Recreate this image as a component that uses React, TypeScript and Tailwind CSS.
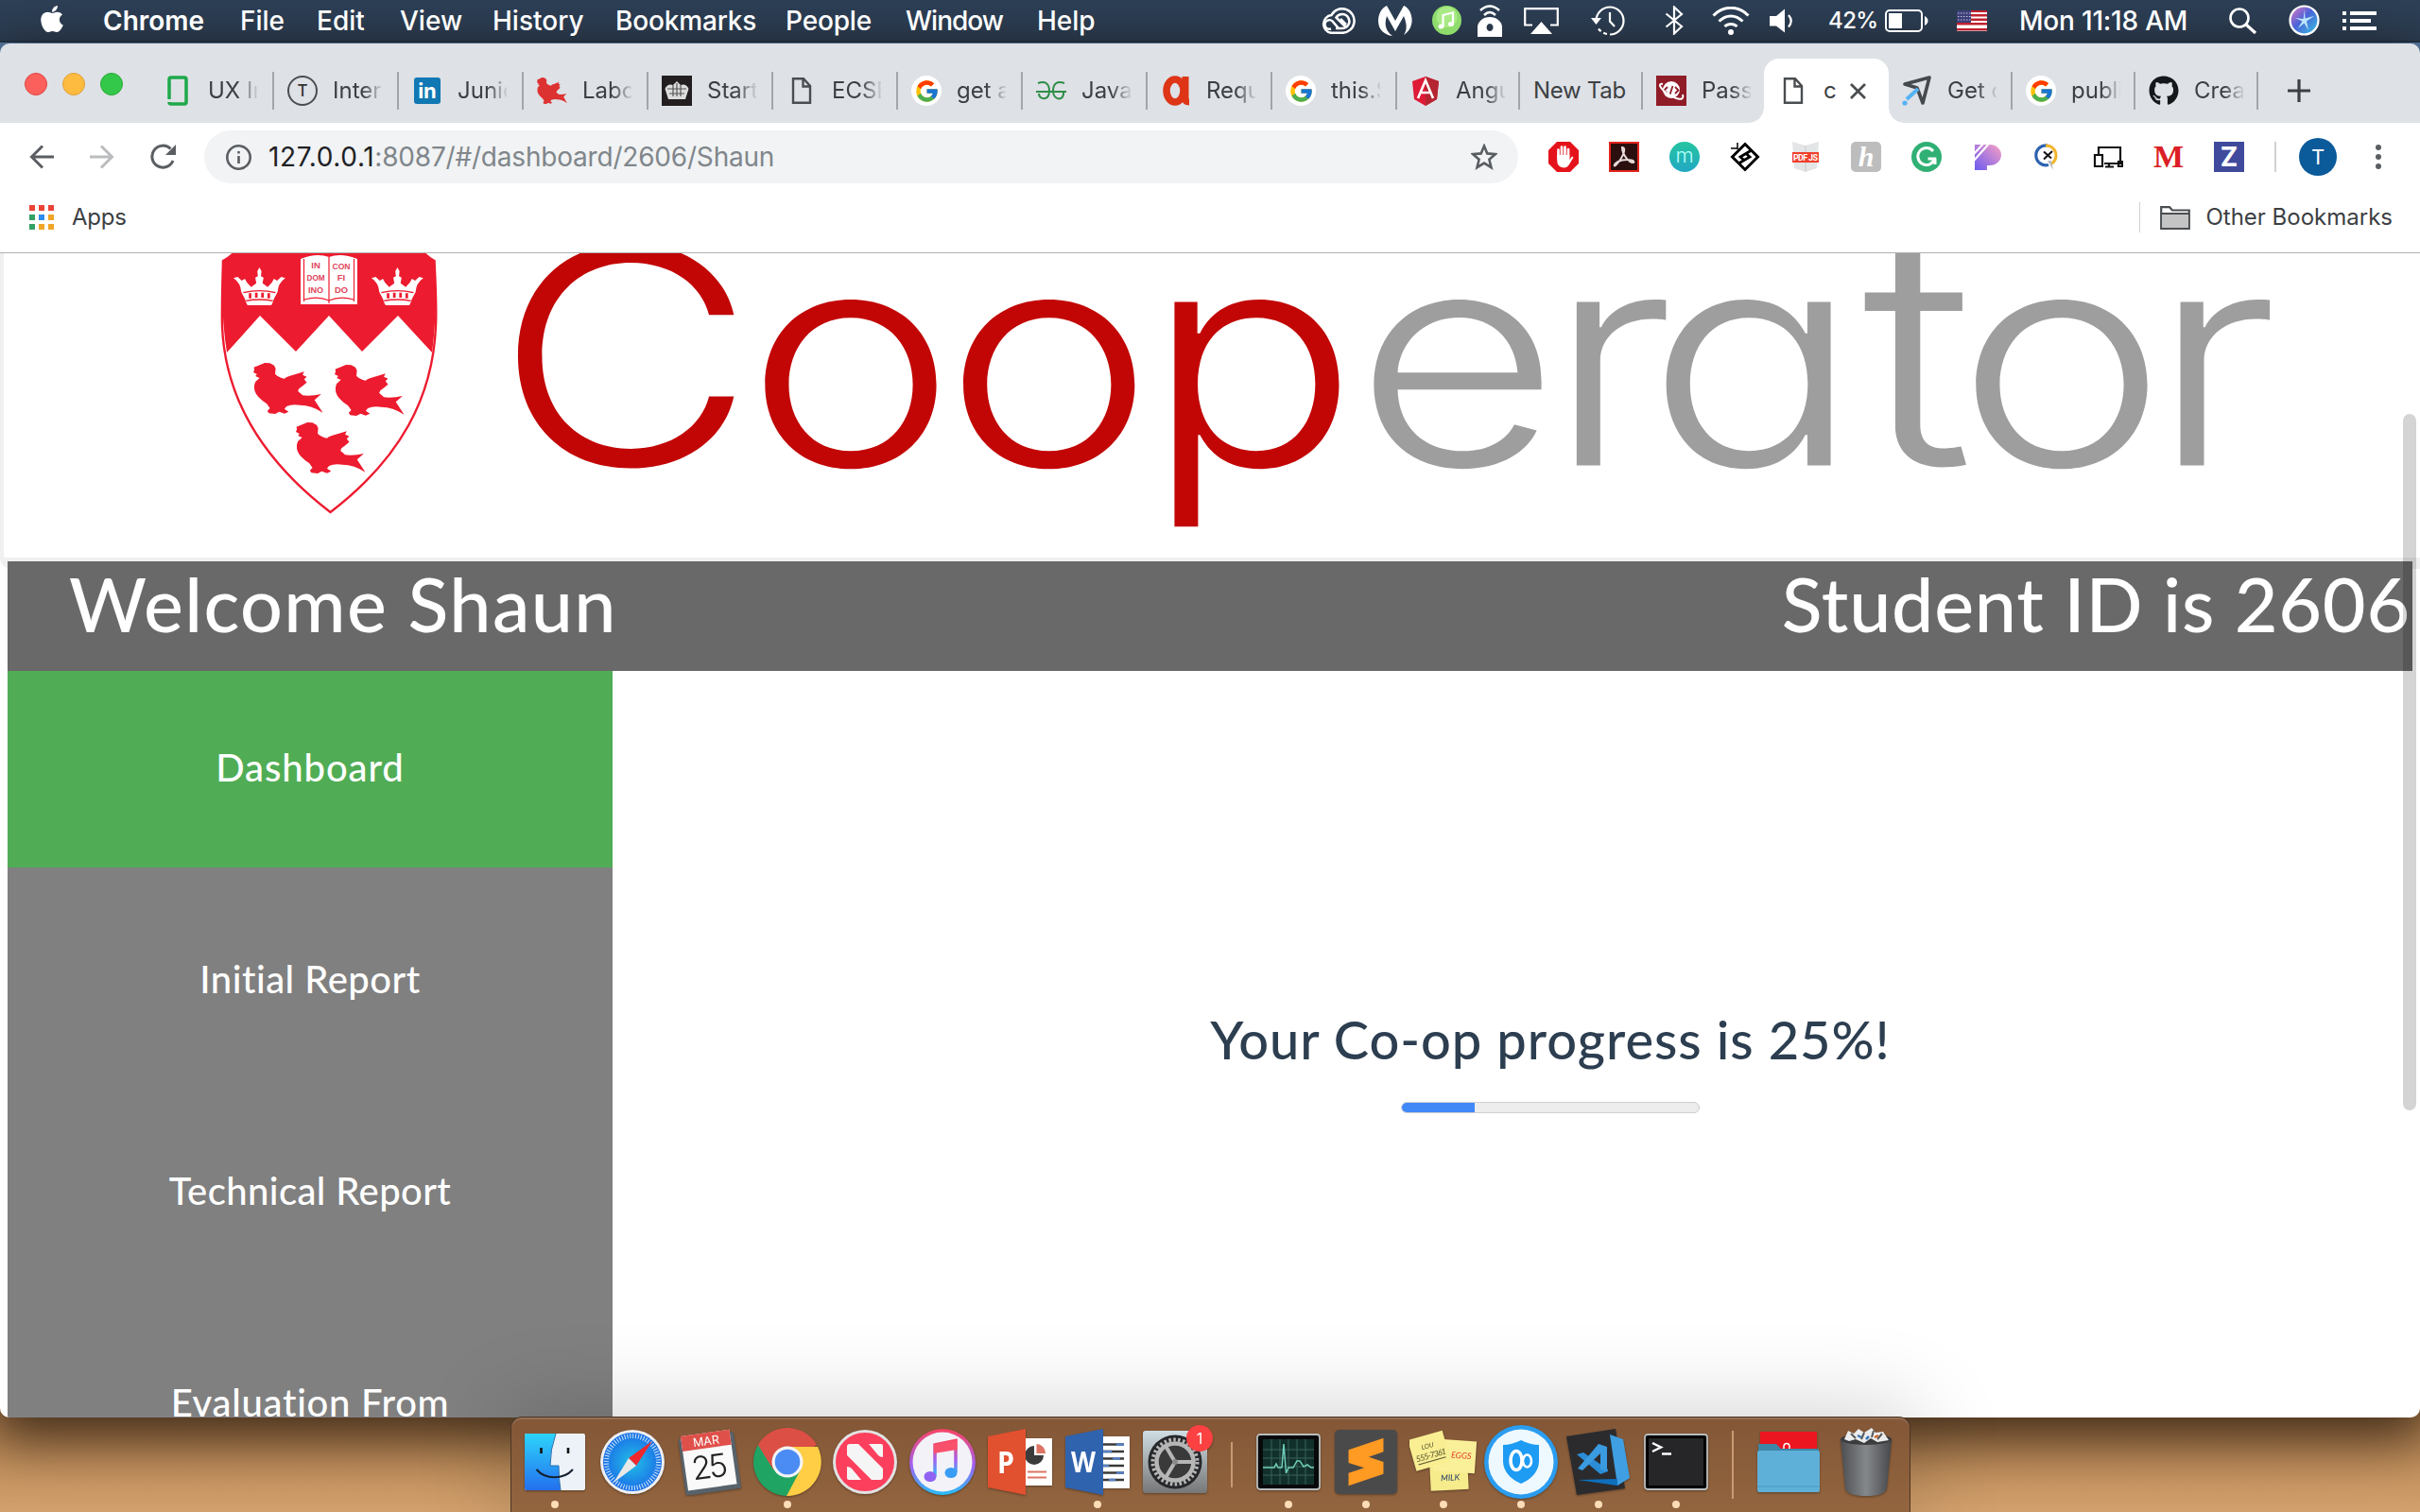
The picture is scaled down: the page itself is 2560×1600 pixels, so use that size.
import React from "react";
import { FaApple, FaGithub } from "react-icons/fa";
import { FcGoogle } from "react-icons/fc";

/* ---------- menu bar ---------- */

const menus = [
  { label: "Chrome", cls: "w-[145px] font-semibold" },
  { label: "File", cls: "w-[81px]" },
  { label: "Edit", cls: "w-[88px]" },
  { label: "View", cls: "w-[98px]" },
  { label: "History", cls: "w-[130px]" },
  { label: "Bookmarks", cls: "w-[180px] tracking-[-0.15px]" },
  { label: "People", cls: "w-[127px] tracking-[-0.15px]" },
  { label: "Window", cls: "w-[139px] tracking-[-1px]" },
  { label: "Help", cls: "w-[80px]" },
];

function CloudIcon() {
  return (
    <svg className="h-7 w-[38px]" viewBox="0 0 38 28" fill="none" stroke="#fff" strokeWidth="2.500">
      <path d="M12 26.800 H24 A12.800 12.800 0 1 0 12.500 8 A9.500 9.500 0 0 0 12 26.800Z" />
      <path d="M17 22 H24 A7.500 7.500 0 1 0 17.500 10.500 L27 20" />
      <path d="M20 22 L14.500 15.500 A4.800 4.800 0 1 0 12 22.500" />
      <path d="M22 12 L28 18" />
    </svg>
  );
}

function MalwareIcon() {
  return (
    <svg className="h-8 w-9" viewBox="0 0 36 32" fill="#fff">
      <path d="M9 0 L18 16 L27 0 C34 3 37 13 35 20 C34 25 31 28 27 31 C30 26 31 21 27 11 L18 27 L9 11 C6 20 8 27 15 32 C6 31 0 25 0 16 C0 9 3 3 9 0Z" />
    </svg>
  );
}

function RemoteIcon() {
  return (
    <svg className="h-[34px] w-[26px]" viewBox="0 0 26 34" fill="none" stroke="#fff" strokeWidth="2.500">
      <path d="M3 6 Q13 -3 23 6" />
      <path d="M7 11 Q13 5 19 11" />
      <path d="M0 34 V24 a13 11 0 0 1 26 0 V34Z M13 20 a3.500 4 0 1 0 .1 0Z" fill="#fff" fillRule="evenodd" stroke="none" />
    </svg>
  );
}

function StatusIcons() {
  return (
    <div className="flex h-full items-center">
      <CloudIcon />
      <div className="w-6" />
      <MalwareIcon />
      <div className="w-[21px]" />
      <svg className="h-[31px] w-[31px]" viewBox="0 0 31 31">
        <circle cx="15.500" cy="15.500" r="15.500" fill="#8fdc6c" />
        <circle cx="15.500" cy="12" r="11" fill="#a9ea86" />
        <path d="M11.500 22 V10 L22 7.500 V19.500" fill="none" stroke="#fff" strokeWidth="2.200" />
        <ellipse cx="9.500" cy="22" rx="3" ry="2.500" fill="#fff" />
        <ellipse cx="20" cy="19.500" rx="3" ry="2.500" fill="#fff" />
      </svg>
      <div className="w-[17px]" />
      <RemoteIcon />
      <div className="w-[23px]" />
      <svg className="h-7 w-[37px]" viewBox="0 0 37 28" fill="none" stroke="#fff" strokeWidth="2.200">
        <path d="M9 18.500 H1.200 V1.200 H35.800 V18.500 H28" />
        <path d="M18.500 15 L30 28 H7Z" fill="#fff" stroke="none" />
      </svg>
      <div className="w-[34px]" />
      <svg className="h-8 w-9" viewBox="0 0 36 32" fill="none" stroke="#fff" strokeWidth="2.200">
        <path d="M5.500 16 A14.500 14.500 0 1 1 20 30.500" />
        <path d="M17 30 A14.500 14.500 0 0 1 8 24.500" strokeDasharray="4 3" />
        <path d="M0 13 H11 L5.500 20Z" fill="#fff" stroke="none" />
        <path d="M20 7 V16.500 L25 22" />
      </svg>
      <div className="w-[42px]" />
      <svg className="h-[31px] w-5" viewBox="0 0 20 31" fill="none" stroke="#fff" strokeWidth="2.200">
        <path d="M1.500 8.500 L18 22 L10 29.500 V1.500 L18 9 L1.500 22.500" />
      </svg>
      <div className="w-[30px]" />
      <svg className="h-[30px] w-10" viewBox="0 0 40 30" fill="none" stroke="#fff" strokeWidth="3">
        <path d="M1.500 9.500 C12 -1.500 28 -1.500 38.500 9.500" />
        <path d="M7.500 15.500 C15 8 25 8 32.500 15.500" />
        <path d="M13.500 21 C17 17.500 23 17.500 26.500 21" />
        <circle cx="20" cy="27" r="3" fill="#fff" stroke="none" />
      </svg>
      <div className="w-[21px]" />
      <svg className="h-[26px] w-[26px]" viewBox="0 0 26 26">
        <path d="M0 8 H7 L16 0.500 V25.500 L7 18.500 H0Z" fill="#fff" />
        <path d="M20 7 Q25.500 13 20 19.500" fill="none" stroke="#fff" strokeWidth="2.200" />
      </svg>
      <span className="ml-[36px] w-[60px] text-[24px] font-medium tracking-[-0.6px]">42%</span>
      <svg className="h-6 w-[46px]" viewBox="0 0 46 24">
        <rect x="1" y="1" width="38" height="22" rx="4" fill="none" stroke="#fff" strokeWidth="2" />
        <rect x="4" y="4" width="14" height="16" fill="#fff" />
        <path d="M42 7 Q45.500 9 45.500 12 Q45.500 15 42 17Z" fill="#fff" />
      </svg>
      <svg className="ml-[30px] h-[22px] w-8" viewBox="0 0 32 22">
        <rect width="32" height="22" fill="#fff" />
        <g fill="#c0222f">
          <rect y="0" width="32" height="2" />
          <rect y="4" width="32" height="2.500" />
          <rect y="8.500" width="32" height="2.500" />
          <rect y="13" width="32" height="2.500" />
          <rect y="19" width="32" height="2.500" />
        </g>
        <rect width="15" height="13" fill="#3d3f78" />
        <path d="M1 3 H15 M1 6.500 H15 M1 10 H15" stroke="#c4c5dc" strokeDasharray="1.500 1.500" />
      </svg>
      <span className="ml-[34px] w-[222px] text-[28px] font-medium tracking-[-0.2px]">Mon 11:18 AM</span>
      <svg className="h-7 w-[30px]" viewBox="0 0 30 28" fill="none" stroke="#fff" strokeWidth="2.600">
        <circle cx="11" cy="11" r="9.500" />
        <path d="M18 18 L28 27" strokeWidth="3.200" />
      </svg>
      <svg className="ml-[33px] h-[33px] w-[33px]" viewBox="0 0 33 33">
        <defs>
          <linearGradient id="siri" x1="0" y1="0" x2="1" y2="1">
            <stop offset="0" stopColor="#f07bc0" />
            <stop offset="0.450" stopColor="#4b63d8" />
            <stop offset="1" stopColor="#35c6e0" />
          </linearGradient>
        </defs>
        <circle cx="16.500" cy="16.500" r="15" fill="url(#siri)" stroke="#fff" strokeWidth="2.200" />
        <path d="M17 5 L17.500 14.500 L27 12 L19 17.500 L21 27 L16.500 19.500 L10 25 L14.500 17.500 L7 14 L15.500 15Z" fill="#c9f4ff" opacity=".9" />
      </svg>
      <svg className="ml-6 h-5 w-9" viewBox="0 0 36 20" fill="#fff">
        <path d="M0 0h4v4H0zM8 0h28v4H8zM0 8h4v4H0zM8 8h22v4H8zM0 16h4v4H0zM8 16h28v4H8z" />
      </svg>
    </div>
  );
}

function MenuBar() {
  return (
    <header className="flex h-[45px] items-center justify-between border-b-2 border-[#22364b] bg-[#2d4057] pr-[46px] pl-[41px] leading-none text-white">
      <div className="flex items-center text-[28px] font-medium">
        <div className="w-[68px] pb-1">
          <FaApple className="h-8 w-7" />
        </div>
        {menus.map((m) => (
          <span key={m.label} className={`${m.cls} whitespace-nowrap`}>
            {m.label}
          </span>
        ))}
      </div>
      <StatusIcons />
    </header>
  );
}

/* ---------- tab strip ---------- */

function Page() {
  return (
    <svg className="h-7 w-8" viewBox="0 0 32 28" fill="none" stroke="#4a4d50" strokeWidth="2.400">
      <path d="M7 1.200 H18 L25 9 V26.800 H7Z M17.500 1.500 V9.500 H25" />
    </svg>
  );
}

function Google() {
  return (
    <div className="flex size-8 items-center justify-center rounded-full bg-white">
      <FcGoogle className="size-[27px]" />
    </div>
  );
}

const icons: Record<string, React.ReactNode> = {
  glass: (
    <svg className="size-8" viewBox="0 0 32 32" fill="none" stroke="#1fa84a" strokeWidth="3.500">
      <path d="M7 25 V4 Q7 2 9 2 H23 Q25 2 25 4 V7" />
      <path d="M7 28 Q7 30 9 30 H23 Q25 30 25 28 V7" />
    </svg>
  ),
  t: (
    <div className="flex size-8 items-center justify-center rounded-full border-2 border-[#4a4d50] text-[17px] font-medium text-[#333]">T</div>
  ),
  linkedin: (
    <div className="mx-0.5 flex size-7 items-center justify-center rounded-[3px] bg-[#1178b3] text-[22px] font-bold text-white">in</div>
  ),
  bird: (
    <svg className="h-7 w-8" viewBox="0 0 134 162" preserveAspectRatio="none" fill="#dd3232">
      <path d={birdPath()} />
    </svg>
  ),
  crown: (
    <svg className="size-8" viewBox="0 0 32 32">
      <rect width="32" height="32" fill="#231f20" />
      <path d="M7 25 L3.500 14 Q6 8 12 10 L16 6 L20 10 Q26 8 28.500 14 L25 25Z" fill="#ddd" />
      <path d="M6 14 H26 M8 19 H24 M12 10 V22 M16 8 V22 M20 10 V22" stroke="#555" strokeWidth="1.200" />
    </svg>
  ),
  page: <Page />,
  google: <Google />,
  gfg: (
    <svg className="size-8" viewBox="0 0 32 32" fill="none" stroke="#2f8d46" strokeWidth="2">
      <path d="M0 17 H32 M2 8 C10 5 14 9 14 16 C14 27 3 26 3 19 M30 8 C22 5 18 9 18 16 C18 27 30 27 29 18" />
    </svg>
  ),
  a: (
    <svg className="size-8" viewBox="0 0 32 32" fill="none" stroke="#dd3516" strokeWidth="7.500">
      <ellipse cx="15" cy="16" rx="9" ry="12" />
      <path d="M26 1 V25 Q26 28 30 28" strokeWidth="7" />
    </svg>
  ),
  angular: (
    <svg className="h-[31px] w-8" viewBox="0 0 32 31">
      <path d="M16 0 L30 5 L28 24 L16 31 L4 24 L2 5Z" fill="#dd1b36" />
      <path d="M16 0 L30 5 L28 24 L16 31Z" fill="#b52431" />
      <path d="M8 23 L16 4 L24 23 M11 17 H21" fill="none" stroke="#fff" strokeWidth="2.600" />
    </svg>
  ),
  pass: (
    <svg className="size-8" viewBox="0 0 32 32" fill="none" stroke="#fff">
      <rect width="32" height="32" fill="#8f1c27" stroke="none" />
      <circle cx="16" cy="15" r="9" fill="#fff" stroke="none" />
      <path d="M12 12 L8.500 15.500 L12 19 M20 12 L23.500 15.500 L20 19 M17.500 11 L14.500 20" stroke="#8f1c27" strokeWidth="1.800" />
      <path d="M7 9 C2 8 3 13 12 19 C22 26 30 27 28 20" strokeWidth="2" />
    </svg>
  ),
  plane: (
    <svg className="size-8" viewBox="0 0 32 32" fill="none">
      <path d="M3 9 L29 2 L22 29 L16 13 Z" stroke="#454a4f" strokeWidth="3.600" strokeLinejoin="round" />
      <path d="M17 14 L5 25" stroke="#55b3f5" strokeWidth="4" />
      <circle cx="3" cy="29" r="2.600" fill="#55b3f5" />
    </svg>
  ),
  github: <FaGithub className="size-8 text-[#15181b]" />,
};

function birdPath() {
  return "M22 0 L32 1 L40 8 L43 18 L42 35 Q48 46 60 50 Q66 42 80 37 L98 28 L95 38 L103 44 L98 52 L103 62 L96 72 L88 82 L86 90 L92 98 L95 103 Q112 106 131 99 L118 118 L134 158 Q112 134 90 134 Q74 130 64 138 L60 146 L68 155 L60 161 L50 155 L42 162 L30 160 L27 153 L32 144 L26 130 Q6 108 3 90 Q0 75 4 60 L12 48 L4 42 L7 36 L0 30 L2 22 L1 14 L10 8Z";
}

const tabs = [
  { icon: "glass", label: "UX In", w: "w-[132px]" },
  { icon: "t", label: "Inter", w: "w-[132px]" },
  { icon: "linkedin", label: "Junio", w: "w-[132px]" },
  { icon: "bird", label: "Labo", w: "w-[132px]" },
  { icon: "crown", label: "Start", w: "w-[132px]" },
  { icon: "page", label: "ECSE", w: "w-[132px]" },
  { icon: "google", label: "get a", w: "w-[132px]" },
  { icon: "gfg", label: "Java", w: "w-[132px]" },
  { icon: "a", label: "Requ", w: "w-[132px]" },
  { icon: "google", label: "this.$", w: "w-[132px]" },
  { icon: "angular", label: "Angu", w: "w-[130px]" },
  { icon: "", label: "New Tab", w: "w-[130px]" },
  { icon: "pass", label: "Pass", w: "w-[128px]" },
  { icon: "page", label: "c", w: "w-[132px]", active: true },
  { icon: "plane", label: "Get c", w: "w-[131px]" },
  { icon: "google", label: "publi", w: "w-[130px]" },
  { icon: "github", label: "Creat", w: "w-[130px]" },
];

function TabStrip() {
  return (
    <div className="flex h-[84px] items-end bg-[#dee1e6]">
      <div className="flex w-[158px] shrink-0 gap-4 self-start pt-[31px] pl-[26px]">
        <span className="size-6 rounded-full border border-[#e0443e] bg-[#fc605c]" />
        <span className="size-6 rounded-full border border-[#dea034] bg-[#fdbc40]" />
        <span className="size-6 rounded-full border border-[#27aa35] bg-[#34c84a]" />
      </div>
      {tabs.map((t, i) =>
        t.active ? (
          <div key={i} className={`${t.w} relative flex h-[68px] shrink-0 items-center rounded-t-2xl bg-white pl-[15px] text-[24px] leading-none text-[#3c4043]`}>
            <span className="absolute bottom-0 -left-4 size-4 bg-[radial-gradient(circle_at_0_0,transparent_15.5px,white_16px)]" />
            <span className="absolute -right-4 bottom-0 size-4 bg-[radial-gradient(circle_at_100%_0,transparent_15.5px,white_16px)]" />
            <Page />
            <span className="ml-4 w-7">{t.label}</span>
            <svg className="size-[17px]" viewBox="0 0 17 17" stroke="#4a4d50" strokeWidth="2.800">
              <path d="M1 1 L16 16 M16 1 L1 16" />
            </svg>
          </div>
        ) : (
          <div key={i} className={`${t.w} flex h-[68px] shrink-0 items-center text-[24px] leading-none text-[#3c4043]`}>
            <div className="flex flex-1 items-center gap-4 pl-[14px]">
              {t.icon && <span className="shrink-0">{icons[t.icon]}</span>}
              <span
                className={
                  t.icon
                    ? "-my-1 w-[52px] overflow-hidden py-1 whitespace-nowrap [mask-image:linear-gradient(to_right,black_60%,transparent_104%)]"
                    : "whitespace-nowrap tracking-[-0.3px]"
                }
              >
                {t.label}
              </span>
            </div>
            <div className={i === 12 ? "h-10 w-0.5" : "h-10 w-0.5 bg-[#a2a6ab]"} />
          </div>
        ),
      )}
      <svg className="mb-[22px] ml-[31px] size-6" viewBox="0 0 24 24" stroke="#3c4043" strokeWidth="3.200">
        <path d="M12 0 V24 M0 12 H24" />
      </svg>
    </div>
  );
}

/* ---------- toolbar ---------- */

function Extensions() {
  return (
    <div className="flex items-center gap-8 leading-none">
      <svg className="size-8" viewBox="0 0 32 32">
        <path d="M9 0 H23 L32 9 V23 L23 32 H9 L0 23 V9Z" fill="#e4131b" />
        <path d="M10.500 17 V8.500 M14 15 V5.500 M17.500 15 V5.500 M21 17 V8" stroke="#fff" strokeWidth="2.700" strokeLinecap="round" />
        <path d="M9.200 14 H22.300 V19 L25 15.500 L26.500 16.500 L22 24 Q20 27.500 16 27.500 Q9.200 27 9.200 20Z" fill="#fff" />
      </svg>
      <svg className="size-8" viewBox="0 0 32 32">
        <rect x="1" y="1" width="30" height="30" fill="#2a0f0e" stroke="#e2241b" strokeWidth="2" />
        <path d="M14 6 C19 6 15 17 7 25 C4 27 6 21 14 19.500 C22 18 28 20 26 22 C22 23 14 14 14 6Z" fill="none" stroke="#e6d9d8" strokeWidth="2" />
      </svg>
      <div className="flex size-8 items-center justify-center rounded-full bg-[linear-gradient(#25c5a0,#22a7c4)] pb-1 text-[22px] font-light text-[#bff]">m</div>
      <svg className="size-8" viewBox="0 0 32 32" fill="none" stroke="#000" strokeWidth="3">
        <path d="M16 2.500 L29.500 16 L16 29.500 L2.500 16Z" />
        <path d="M22 9.500 L11 16 L15.500 20 M10 22.500 L21 16 L16.500 12" strokeWidth="2.800" />
        <path d="M1 7 H8 M8 1 V8" strokeWidth="1.500" />
      </svg>
      <svg className="size-8" viewBox="0 0 32 32">
        <path d="M2 0 L16 4 L30 0 L28 28 L16 32 L4 28Z" fill="#e3e5e6" />
        <path d="M16 4 V32" stroke="#c6c9cb" />
        <rect x="2" y="11" width="28" height="11" fill="#f0402c" />
        <text x="3" y="20" fontFamily="Roboto" fontWeight="700" fontSize="9" fill="#fff" textLength="26">PDF JS</text>
      </svg>
      <div className="flex size-8 items-center justify-center rounded-[5px] bg-[#bdbdbd] font-['Liberation_Serif'] text-[30px] font-bold text-white italic">h</div>
      <svg className="size-8" viewBox="0 0 32 32" fill="none">
        <circle cx="16" cy="16" r="16" fill="#30b074" />
        <path d="M23 10 A9 9 0 1 0 24.500 18 H17.500 M25 18 V24" stroke="#fff" strokeWidth="3" />
      </svg>
      <svg className="h-8 w-8" viewBox="0 0 32 32">
        <defs>
          <linearGradient id="pg" x1="1" y1="0" x2="0" y2="1">
            <stop offset="0" stopColor="#fba0c4" />
            <stop offset="1" stopColor="#6a5bf0" />
          </linearGradient>
        </defs>
        <path d="M3 3 H19 A12 11 0 0 1 19 25 H16 V30 H3Z" fill="url(#pg)" />
        <path d="M2 13 L12 2 M2 20 L18 2" stroke="#fff" strokeWidth="2" />
      </svg>
      <svg className="size-8" viewBox="0 0 32 32" fill="none">
        <path d="M16 4 A10.500 10.500 0 1 0 17 24.500" stroke="#2d63b0" strokeWidth="3.200" />
        <path d="M14 4 A10.500 10.500 0 0 1 19 24" stroke="#f3b52c" strokeWidth="3" />
        <path d="M12 10.500 L20 17.500 M21 10 L12 18.500" stroke="#111" strokeWidth="2" />
        <path d="M16 20 L22 30 L20 20Z" fill="#b9bec4" />
      </svg>
      <svg className="size-8" viewBox="0 0 32 32" fill="none" stroke="#111" strokeWidth="2.200">
        <path d="M6 13 V6 H29 V23 H12" />
        <path d="M2 14 H10 V26 H2Z M27 26 V21 H31 V26Z M17 23 V26 M13 26.500 H22" />
      </svg>
      <div className="flex size-8 items-center justify-center font-['Liberation_Serif'] text-[34px] font-bold text-[#dc1f26]">M</div>
      <div className="flex size-8 items-center justify-center bg-[#3f4a9c] text-[28px] font-bold text-white">Z</div>
    </div>
  );
}

function Toolbar() {
  return (
    <div className="flex h-[72px] items-center bg-white text-[28px] leading-none">
      <div className="flex w-[216px] items-center pl-[31px]">
        <svg className="size-[26px]" viewBox="0 0 26 26" fill="none" stroke="#5a5e62" strokeWidth="3">
          <path d="M26 13 H2.500 M14 1.500 L2.500 13 L14 24.500" />
        </svg>
        <svg className="ml-[38px] size-[26px]" viewBox="0 0 26 26" fill="none" stroke="#babcbe" strokeWidth="3">
          <path d="M0 13 H23.500 M12 1.500 L23.500 13 L12 24.500" />
        </svg>
        <svg className="ml-[38px] size-7" viewBox="0 0 28 28" fill="none" stroke="#5a5e62" strokeWidth="3">
          <path d="M21.500 5.500 A11.500 11.500 0 1 0 24 18" />
          <path d="M27 1 V12 H16Z" fill="#5a5e62" stroke="none" />
        </svg>
      </div>
      <div className="flex h-14 w-[1390px] items-center rounded-full bg-[#f1f3f4] pr-[22px] pl-[23px]">
        <svg className="size-[27px]" viewBox="0 0 27 27" fill="none" stroke="#5a5e62" strokeWidth="2.600">
          <circle cx="13.500" cy="13.500" r="12.200" />
          <path d="M13.500 12 V20 M13.500 7 V9.600" />
        </svg>
        <div className="ml-[18px] flex-1 text-[#80868b]">
          <span className="tracking-[0.65px] text-[#202124]">127.0.0.1</span>
          <span className="tracking-[-0.2px]">:8087/#/dashboard/2606/Shaun</span>
        </div>
        <svg className="size-7" viewBox="0 0 28 28" fill="none" stroke="#5a5e62" strokeWidth="2.600">
          <path d="M14 2.500 L17.300 10.400 L26 11.100 L19.400 16.700 L21.500 25.200 L14 20.600 L6.500 25.200 L8.600 16.700 L2 11.100 L10.700 10.400Z" />
        </svg>
      </div>
      <div className="ml-8">
        <Extensions />
      </div>
      <div className="ml-8 h-8 w-0.5 bg-[#d0d2d4]" />
      <div className="ml-6 flex size-10 items-center justify-center rounded-full bg-[#0b5a9a] text-[22px] font-normal text-white">T</div>
      <div className="ml-[41px] flex flex-col gap-1">
        <span className="size-1.5 rounded-full bg-[#5a5e62]" />
        <span className="size-1.5 rounded-full bg-[#5a5e62]" />
        <span className="size-1.5 rounded-full bg-[#5a5e62]" />
      </div>
    </div>
  );
}

function BookmarksBar() {
  const dots = ["bg-[#ea4335]", "bg-[#ea4335]", "bg-[#ea4335]", "bg-[#34a065]", "bg-[#2e8bf0]", "bg-[#f0a428]", "bg-[#34a065]", "bg-[#f0a428]", "bg-[#f0a428]"];
  return (
    <div className="flex h-[66px] items-center justify-between border-b border-[#b0b1b2] bg-white pr-[29px] pb-[9px] pl-[31px] text-[24px] leading-none text-[#3c4043]">
      <div className="flex items-center gap-[19px]">
        <div className="grid grid-cols-3 gap-1">
          {dots.map((d, i) => (
            <span key={i} className={`${d} size-1.5`} />
          ))}
        </div>
        <span className="tracking-[-0.2px]">Apps</span>
      </div>
      <div className="flex items-center">
        <div className="h-8 w-px bg-[#cfd1d3]" />
        <svg className="ml-[21px] h-[25px] w-8" viewBox="0 0 32 25">
          <path d="M1.200 23.800 V1.200 H10 L13 4.500 H30.800 V23.800Z" fill="#fff" stroke="#4a4d50" strokeWidth="2.200" />
          <path d="M2 9 H30 V23 H2Z" fill="#c4c4c4" />
          <path d="M1 8 H31" stroke="#4a4d50" strokeWidth="2" />
        </svg>
        <span className="ml-4">Other Bookmarks</span>
      </div>
    </div>
  );
}

/* ---------- page ---------- */

function Crown({ dx }: { dx: number }) {
  return (
    <g transform={`translate(${dx} 283) scale(.5485 .3333)`} fill="#fff">
      <path d="M27 120 Q24 112 22 100 L15 78 Q14 50 0 34 L8 30 L16 42 L22 36 L26 48 L34 62 L44 50 L42 32 L47 28 L46 12 L50 0 L54 12 L53 28 L58 32 L56 50 L66 62 L74 48 L78 36 L84 42 L92 30 L100 34 Q86 50 85 78 L78 100 Q76 112 73 120Z" />
      <path d="M19 80 Q50 68 81 80 M24 106 Q50 98 76 106" fill="none" stroke="#ed1b2f" strokeWidth="4" />
      <path d="M32 82 V98 M44 80 V96 M56 80 V96 M68 82 V98" stroke="#ed1b2f" strokeWidth="5" />
    </g>
  );
}

function Shield() {
  return (
    <g>
      <path d="M236 276 Q246 271 252 262 H444 Q450 271 459.500 276 Q462 325 461 345 C458 420 424 485 349.500 542 C275 485 238 420 235 345 Q234.500 325 236 276Z" fill="#fff" stroke="#ed1b2f" strokeWidth="2.400" />
      <path d="M236 276 Q246 271 252 262 H444 Q450 271 459.500 276 Q463 330 457 373 L421 334 L383 372 L348 334 L313 372 L275 334 L240 373 Q233 330 236 276Z" fill="#ed1b2f" />
      <Crown dx={247} />
      <Crown dx={393} />
      <path d="M318 274 Q335 267 348 272 Q361 267 378 274 V322 H318Z" fill="#fff" />
      <path d="M348 272 V321 M322 317 Q336 313 348 318 Q360 313 374 317 M321.500 274 V319 M374.500 274 V319" fill="none" stroke="#ed1b2f" strokeWidth="1.200" />
      <g fontFamily="Liberation Sans" fontWeight="700" fontSize="9.500" fill="#e0455a" textAnchor="middle">
        <text x="334" y="284">IN</text>
        <text x="334" y="297" textLength="19" lengthAdjust="spacingAndGlyphs">DOM</text>
        <text x="334" y="310" textLength="16" lengthAdjust="spacingAndGlyphs">INO</text>
        <text x="361" y="285" textLength="19" lengthAdjust="spacingAndGlyphs">CON</text>
        <text x="361" y="297">FI</text>
        <text x="361" y="310" textLength="14" lengthAdjust="spacingAndGlyphs">DO</text>
      </g>
      <g fill="#ed1b2f">
        <path d={birdPath()} transform="translate(268 384) scale(.5485 .3333)" />
        <path d={birdPath()} transform="translate(354 386) scale(.5485 .3333)" />
        <path d={birdPath()} transform="translate(313 447) scale(.5485 .3333)" />
      </g>
    </g>
  );
}

function Logo() {
  return (
    <svg className="h-[322px] w-[2556px]" viewBox="4 268 2556 322">
      <Shield />
      <g transform="scale(1.185 1)">
        <text y="492.500" fontFamily="Inter" fontWeight="300" fontSize="317" fill="#c20606" style={{ fontFeatureSettings: '"cv11" 1' }}>
          <tspan x="442" fontSize="319">C</tspan>
          <tspan x="665.500">o</tspan>
          <tspan x="842.500">o</tspan>
          <tspan x="1022">p</tspan>
          <tspan fill="#9e9e9e">
            <tspan x="1209">e</tspan>
            <tspan x="1381">r</tspan>
            <tspan x="1470">a</tspan>
            <tspan x="1662" fontSize="335">t</tspan>
            <tspan x="1746.500">o</tspan>
            <tspan x="1920">r</tspan>
          </tspan>
        </text>
      </g>
    </svg>
  );
}

function Dashboard() {
  return (
    <div className="relative h-[1232px] overflow-hidden bg-white font-['Lato'] text-white">
      <div className="h-[334px] rounded-bl-xl border-b-[12px] border-l-4 border-[#f0f0f0]">
        <Logo />
      </div>
      <div className="relative mx-2 -mt-2 flex h-[116px] items-start justify-between bg-[#696969] pt-[5px] pr-[2px] pl-[65px] text-[79px] leading-[80px] font-medium whitespace-nowrap">
        <h1 className="tracking-[1.4px]">Welcome Shaun</h1>
        <div className="tracking-[0.75px]">Student ID is 2606</div>
      </div>
      <div className="flex h-[790px] pl-2">
        <nav className="w-[640px] bg-[#808080] text-center text-[40px] leading-[48px] font-medium">
          <div className="flex h-[208px] items-center justify-center bg-[#50ad55] pb-1 tracking-[0.9px]">Dashboard</div>
          <div className="flex h-[224px] items-center justify-center pt-3 tracking-[0.5px]">Initial Report</div>
          <div className="flex h-[224px] items-center justify-center pt-3 tracking-[0.4px]">Technical Report</div>
          <div className="flex h-[224px] items-center justify-center pt-3 tracking-[0.7px]">Evaluation From</div>
        </nav>
        <main className="mr-2 ml-20 flex flex-1 flex-col items-center pt-[354px] text-[56px] leading-[72px] font-medium tracking-[0.95px] text-[#2c3e50]">
          <p>Your Co-op progress is 25%!</p>
          <div className="mt-[30px] h-3 w-[316px] overflow-hidden rounded-md border border-[#cfcfcf] bg-[#ececec]">
            <div className="h-full w-[77px] bg-[#4189f7]" />
          </div>
        </main>
      </div>
      <div className="absolute top-[170px] right-1 h-[737px] w-3.5 rounded-full bg-black/17" />
    </div>
  );
}

/* ---------- dock ---------- */

function dockIcon(name: string) {
  switch (name) {
    case "finder":
      return (
        <svg className="h-[60px] w-16" viewBox="0 0 64 60">
          <defs>
            <linearGradient id="fd" x1="0" y1="0" x2="0" y2="1">
              <stop offset="0" stopColor="#2dd4fb" />
              <stop offset="1" stopColor="#2470ee" />
            </linearGradient>
          </defs>
          <rect width="64" height="60" rx="2" fill="#edf2f8" />
          <path d="M2 0 H33 Q27 17 27 34 H36 Q36 48 38 60 H2 Q0 60 0 58 V2 Q0 0 2 0Z" fill="url(#fd)" />
          <path d="M33 0 Q27 17 27 34 H36 Q36 48 38 60" fill="none" stroke="#2a6fae" strokeWidth="1" />
          <path d="M17.500 15 V21 M46 15 V21" stroke="#111" strokeWidth="2.600" />
          <path d="M12.500 38 C22 49 41 49 51 38" fill="none" stroke="#14202e" strokeWidth="2" />
        </svg>
      );
    case "safari":
      return (
        <svg className="size-[68px]" viewBox="0 0 68 68">
          <defs>
            <radialGradient id="sf">
              <stop offset="0" stopColor="#22c0e8" />
              <stop offset="1" stopColor="#1b6ee6" />
            </radialGradient>
          </defs>
          <circle cx="34" cy="34" r="34" fill="#eef0f2" />
          <circle cx="34" cy="34" r="31" fill="url(#sf)" />
          <circle cx="34" cy="34" r="27.500" fill="none" stroke="#cfe8fb" strokeWidth="5" strokeDasharray="1 1.880" />
          <path d="M55 12 L38 38 L30 30Z" fill="#f0282d" />
          <path d="M14 56 L38 38 L30 30Z" fill="#e8e8e8" />
        </svg>
      );
    case "calendar":
      return (
        <svg className="h-[70px] w-[66px]" viewBox="0 0 66 70">
          <g transform="rotate(-8 33 35)">
            <rect x="3" y="7" width="59" height="60" fill="#57626b" />
            <rect x="6" y="4" width="52" height="58" fill="#fafafa" />
            <rect x="6" y="4" width="52" height="16" fill="#e0504a" />
            <text x="32" y="17" fontFamily="Inter" fontSize="12.500" fill="#fff" textAnchor="middle">MAR</text>
            <text x="32" y="52" fontFamily="Inter" fontWeight="300" fontSize="34" fill="#222" textAnchor="middle" textLength="38">25</text>
          </g>
        </svg>
      );
    case "chrome":
      return (
        <svg className="size-[72px]" viewBox="0 0 72 72">
          <path d="M36 36 L4.800 18 A36 36 0 0 1 67.200 18Z" fill="#db4f44" />
          <path d="M36 36 L4.800 18 A36 36 0 0 0 35 72 L51 44Z" fill="#1fa463" />
          <path d="M36 20 H68 A36 36 0 0 1 35 72 L50 44Z" fill="#ffce44" />
          <path d="M4.800 18 L36 20 V36 L21 44Z" fill="#db4f44" />
          <circle cx="36" cy="36" r="16.500" fill="#f4f4f4" />
          <circle cx="36" cy="36" r="13.300" fill="#4b8bf4" />
        </svg>
      );
    case "news":
      return (
        <svg className="size-[68px]" viewBox="0 0 68 68">
          <circle cx="34" cy="34" r="34" fill="#e3e3e3" />
          <circle cx="34" cy="34" r="31" fill="#fc3f5c" />
          <path d="M15 18 Q15 15 18 15 H27 L53 41 V50 Q53 53 50 53 H41 L15 27Z M38 15 H51 Q53 15 53 17 V29Q50 29 48 27Z M15 39 Q18 39 20 41 L30 53 H17 Q15 53 15 51Z" fill="#f5f5f5" />
        </svg>
      );
    case "itunes":
      return (
        <svg className="size-[70px]" viewBox="0 0 70 70">
          <defs>
            <linearGradient id="it" x1="0" y1="0" x2="0" y2="1">
              <stop offset="0" stopColor="#fb4463" />
              <stop offset="0.550" stopColor="#a261ef" />
              <stop offset="1" stopColor="#26bff9" />
            </linearGradient>
          </defs>
          <circle cx="35" cy="35" r="35" fill="url(#it)" />
          <circle cx="35" cy="35" r="31.500" fill="#f2f2f8" />
          <path d="M27 50 V17 L49 12.500 V46" fill="none" stroke="url(#it)" strokeWidth="3.500" />
          <path d="M26 16.500 L50.500 12 V22 L26 26Z" fill="#f9506c" />
          <ellipse cx="22" cy="50.500" rx="6.500" ry="5.500" fill="#9062f2" />
          <ellipse cx="44" cy="46.500" rx="6.500" ry="5.500" fill="#3a9df5" />
        </svg>
      );
    case "powerpoint":
      return (
        <svg className="h-[70px] w-[68px]" viewBox="0 0 68 70">
          <rect x="36" y="10" width="32" height="50" fill="#fff" />
          <path d="M49 18 A10 10 0 1 0 59 28 H49Z" fill="#3b3b3b" />
          <path d="M51.500 16 A10 10 0 0 1 61 26 H51.500Z" fill="#dd7464" />
          <path d="M42 45.500 H62 M42 51.500 H62" stroke="#dd7464" strokeWidth="2.200" />
          <path d="M0 8 L40 0 V70 L0 62Z" fill="#e1502f" />
          <text x="10" y="47" fontFamily="Open Sans" fontWeight="700" fontSize="32" fill="#fff" textLength="18" lengthAdjust="spacingAndGlyphs">P</text>
        </svg>
      );
    case "word":
      return (
        <svg className="h-[70px] w-[68px]" viewBox="0 0 68 70">
          <rect x="36" y="8" width="32" height="55" fill="#fff" />
          <path d="M40 16.500 H62 M40 24 H62 M40 31.500 H62 M40 39 H62 M40 46.500 H62 M40 54 H62" stroke="#3a3a3a" strokeWidth="2.600" />
          <path d="M54 16.500 H62 M40 24 H49 M50 31.500 H58 M40 39 H46 M54 46.500 H62 M46 54 H53" stroke="#5680c6" strokeWidth="2.600" />
          <path d="M0 8 L40 0 V70 L0 62Z" fill="#3063ad" />
          <text x="6" y="46" fontFamily="Open Sans" fontWeight="700" fontSize="30" fill="#fff" textLength="26" lengthAdjust="spacingAndGlyphs">W</text>
        </svg>
      );
    case "settings":
      return (
        <div className="relative">
          <svg className="h-[66px] w-[68px]" viewBox="0 0 68 66">
            <defs>
              <linearGradient id="st" x1="0" y1="0" x2="0" y2="1">
                <stop offset="0" stopColor="#cfdde4" />
                <stop offset="1" stopColor="#777" />
              </linearGradient>
            </defs>
            <rect width="68" height="66" rx="3" fill="url(#st)" />
            <circle cx="34" cy="33" r="28.500" fill="#26282b" />
            <circle cx="34" cy="33" r="23.500" fill="none" stroke="#b6b6b6" strokeWidth="4" strokeDasharray="2.600 2.320" />
            <circle cx="34" cy="33" r="19.500" fill="#3a3a3a" stroke="#b6b6b6" strokeWidth="4.500" />
            <path d="M34 33 H53 M34 33 L24.500 17 M34 33 L24.500 49" stroke="#b6b6b6" strokeWidth="4" />
            <circle cx="34" cy="33" r="3" fill="#8a8a8a" />
          </svg>
          <span className="absolute -top-[6px] -right-[6px] flex size-[28px] items-center justify-center rounded-full bg-[#fb4141] text-[16px] text-white">1</span>
        </div>
      );
    case "activity":
      return (
        <svg className="h-[60px] w-[68px]" viewBox="0 0 68 60">
          <rect x="1" y="1" width="66" height="58" rx="3" fill="#08090a" stroke="#b9bdbd" strokeWidth="1.800" />
          <rect x="7" y="6" width="54" height="48" fill="#12302b" />
          <path d="M7 17 H61 M7 26 H61 M7 35 H61 M7 44 H61 M16 6 V54 M25 6 V54 M34 6 V54 M43 6 V54 M52 6 V54" stroke="#37635b" strokeWidth="1" />
          <path d="M7 36 H19 L21 32 L23 36 H27 L29 11 L31.500 42 L34 36 H39 L43 29 L46 29 L50 35 L54 33 L58 36 H61" fill="none" stroke="#6fcdb8" strokeWidth="1.500" />
        </svg>
      );
    case "sublime":
      return (
        <svg className="size-[68px]" viewBox="0 0 68 70">
          <rect width="68" height="70" rx="5" fill="#4a4a4a" />
          <path d="M15 22 L53 9 V24 L37 29.500 L53 35 V48 L15 61 V47 L32 41.500 L15 36Z" fill="#ff9a23" />
        </svg>
      );
    case "stickies":
      return (
        <svg className="h-[68px] w-[72px]" viewBox="0 0 72 68">
          <g fontFamily="Lato" fontStyle="italic">
            <g transform="rotate(-3 38 50)">
              <rect x="22" y="34" width="40" height="30" fill="#f7ec8c" />
              <text x="33" y="54" fontSize="9" fill="#23406b">MILK</text>
            </g>
            <g transform="rotate(4 50 28)">
              <rect x="26" y="11" width="44" height="34" fill="#fbf09a" />
              <text x="44" y="30" fontSize="9" fill="#e03c22">EGGS</text>
            </g>
            <g transform="rotate(-16 22 22)">
              <rect x="2" y="5" width="38" height="34" fill="#f9ee92" />
              <text x="14" y="19" fontSize="7" fill="#55532f">LOU</text>
              <text x="5" y="30" fontSize="9" fill="#55532f" textLength="33">555-7361</text>
              <path d="M6 33 H36" stroke="#55532f" />
            </g>
          </g>
        </svg>
      );
    case "vpn":
      return (
        <svg className="size-[78px]" viewBox="0 0 78 78">
          <circle cx="39" cy="39" r="39" fill="#2b9df0" />
          <circle cx="39" cy="39" r="34.500" fill="#eef9ff" />
          <path d="M39 16 Q49 21 58 21 V39 Q57 54 39 62 Q21 54 20 39 V21 Q29 21 39 16Z" fill="#1e9bf3" />
          <ellipse cx="34" cy="37.500" rx="6" ry="10" fill="none" stroke="#fff" strokeWidth="3.600" />
          <ellipse cx="45.500" cy="38" rx="4.500" ry="6.500" fill="none" stroke="#fff" strokeWidth="2.600" />
        </svg>
      );
    case "vscode":
      return (
        <svg className="h-[72px] w-[68px]" viewBox="0 0 68 72">
          <path d="M0 9 L52 1 L62 64 L11 71Z" fill="#2b2b2e" />
          <path d="M46 7 L60 12 L67 53 L54 61Z" fill="#3f9fe2" />
          <path d="M12 55 L54 54 V61Z" fill="#0e70bd" />
          <path d="M11 28 L18 26 L44 44 V46 L36 49Z" fill="#2b8cd6" />
          <path d="M12 43 L34 17 L43 20 V46 L36 44 V27 L17 45Z" fill="#3a9be0" />
        </svg>
      );
    case "terminal":
      return (
        <svg className="h-[60px] w-[68px]" viewBox="0 0 68 60">
          <rect x="1" y="1" width="66" height="58" rx="3" fill="#000" stroke="#b9bdbd" strokeWidth="1.800" />
          <rect x="5" y="5" width="58" height="50" fill="#262628" />
          <path d="M9 10 L18 14.500 L9 19" fill="none" stroke="#fff" strokeWidth="2.500" />
          <path d="M19 21.500 H29" stroke="#fff" strokeWidth="2.500" />
        </svg>
      );
    case "folder":
      return (
        <svg className="h-16 w-[66px]" viewBox="0 0 66 64">
          <rect x="3" y="0" width="60" height="30" fill="#ec1620" />
          <path d="M28 22 V16 Q28 12.500 31 12.500 Q34 12.500 34 16 V22" fill="none" stroke="#fff" strokeWidth="1.500" />
          <path d="M1 14 Q1 13 2 13 H20 L25 18 H65 V26 H1Z" fill="#3d86a8" />
          <rect x="0" y="20" width="66" height="44" rx="2" fill="#5fb0d8" />
          <path d="M0 58 H66" stroke="#4a9cc6" />
        </svg>
      );
    default:
      return (
        <svg className="h-[72px] w-14" viewBox="0 0 56 72">
          <defs>
            <linearGradient id="tr">
              <stop offset="0" stopColor="#4c4e50" />
              <stop offset="0.500" stopColor="#85888b" />
              <stop offset="1" stopColor="#45474a" />
            </linearGradient>
          </defs>
          <path d="M1 12 L6 64 Q8 72 28 72 Q48 72 50 64 L55 12Z" fill="url(#tr)" />
          <ellipse cx="28" cy="12" rx="27" ry="6" fill="#3a3c3e" />
          <path d="M5 12 L9 3 L15 6 L20 1 L26 5 L34 0 L38 5 L46 4 L52 13 L40 15 L33 11 L26 16 L17 12 L10 14Z" fill="#ececec" />
          <path d="M12 6 L17 11 M26 5 L23 12 M36 3 L34 10 M45 6 L40 12" stroke="#55585b" strokeWidth="2" />
          <path d="M19 8 L23 10 M28 12 L31 9" stroke="#3a76b8" strokeWidth="2.500" />
          <path d="M37 10 L41 8" stroke="#d0632c" strokeWidth="2.500" />
        </svg>
      );
  }
}

const dock = [
  { name: "finder", running: true },
  { name: "safari" },
  { name: "calendar" },
  { name: "chrome", running: true },
  { name: "news" },
  { name: "itunes" },
  { name: "powerpoint" },
  { name: "word", running: true },
  { name: "settings" },
  { name: "divider-short" },
  { name: "activity", running: true },
  { name: "sublime", running: true },
  { name: "stickies", running: true },
  { name: "vpn", running: true },
  { name: "vscode", running: true },
  { name: "terminal", running: true },
  { name: "divider" },
  { name: "folder" },
  { name: "trash" },
];

function Dock() {
  return (
    <div className="absolute bottom-0 left-[540px] flex h-[101px] w-[1481px] rounded-t-xl border-x border-t border-[#4a3524] bg-[linear-gradient(#835737,#93653f)] pt-[7px] pl-[5px] shadow-[0_0_90px_10px_rgba(0,0,0,0.17),inset_0_2px_0_rgba(255,255,255,0.15)]">
      {dock.map((d) =>
        d.name.startsWith("divider") ? (
          <div key={d.name} className={d.name === "divider" ? "flex w-[37px] justify-center" : "flex w-[38px] justify-center"}>
            <div className={d.name === "divider" ? "mt-[7px] h-[72px] w-0.5 bg-[#c99a73]" : "mt-[19px] h-12 w-0.5 bg-[#c99a73]"} />
          </div>
        ) : (
          <div key={d.name} className="flex w-[82px] flex-col items-center">
            <div className="flex h-20 items-center justify-center drop-shadow-[0_1px_1px_rgba(0,0,0,0.35)]">{dockIcon(d.name)}</div>
            {d.running && <span className="mt-px size-2 rounded-full bg-[#fddcb8]" />}
          </div>
        ),
      )}
    </div>
  );
}

export default function App() {
  return (
    <div className="relative h-[1600px] w-[2560px] overflow-hidden bg-[linear-gradient(#5f86b3_0%,#5f86b3_50%,#b5824f_93%,#d2a06c_100%)] font-['Inter',sans-serif]">
      <MenuBar />
      <div className="mt-px h-[1454px] overflow-hidden rounded-[10px] shadow-[0_15px_55px_10px_rgba(20,12,5,0.7)]">
        <TabStrip />
        <Toolbar />
        <BookmarksBar />
        <Dashboard />
      </div>
      <Dock />
    </div>
  );
}
